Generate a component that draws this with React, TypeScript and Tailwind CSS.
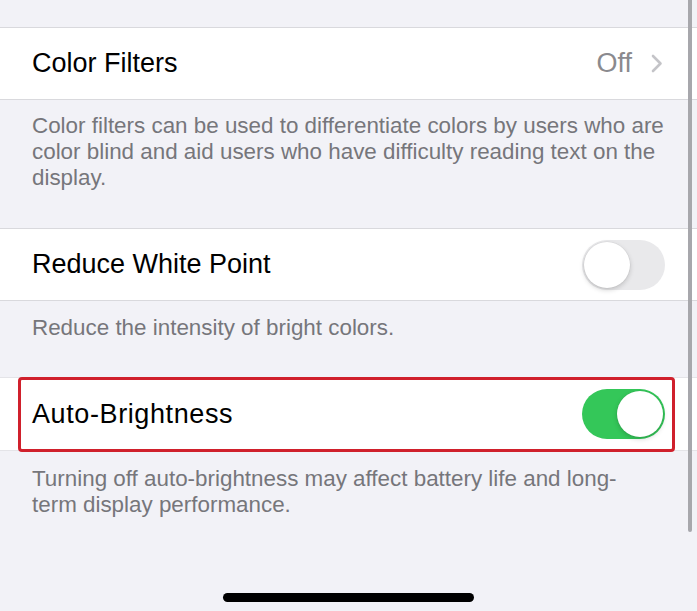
import React from "react";

function Toggle({ on }: { on: boolean }) {
  return (
    <div
      className={
        "w-[83px] h-[50px] rounded-full p-[2px] flex items-center " +
        (on ? "bg-[#34c759] justify-end" : "bg-[#e9e9eb] justify-start")
      }
    >
      <div className="w-[46px] h-[46px] rounded-full bg-white shadow-[0_2px_5px_rgba(0,0,0,0.18),0_0_0_0.5px_rgba(0,0,0,0.06)]" />
    </div>
  );
}

export default function App() {
  return (
    <div className="relative w-[697px] h-[611px] bg-[#f2f2f7] overflow-hidden flex flex-col font-['Liberation_Sans',Arial,sans-serif]">
      <div className="h-[27px] shrink-0" />

      {/* Color Filters */}
      <div className="h-[73px] shrink-0 bg-white border-y border-[#d9d9dd] flex items-center pl-[32px] pr-[34px]">
        <span className="text-[27px] text-black">Color Filters</span>
        <div className="ml-auto flex items-center gap-[19px]">
          <span className="text-[27px] text-[#8a8a8e]">Off</span>
          <svg width="12" height="19" viewBox="0 0 12 19" fill="none">
            <path d="M2 2 L9.5 9.5 L2 17" stroke="#c4c4c8" strokeWidth="2.6" strokeLinecap="round" strokeLinejoin="round" />
          </svg>
        </div>
      </div>
      <div className="shrink-0 pl-[32px] pt-[13px] pb-[37px] text-[22.4px] leading-[26px] text-[#76767b] whitespace-nowrap">
        Color filters can be used to differentiate colors by users who are
        <br />
        color blind and aid users who have difficulty reading text on the
        <br />
        display.
      </div>

      {/* Reduce White Point */}
      <div className="h-[73px] shrink-0 bg-white border-y border-[#d9d9dd] flex items-center pl-[32px] pr-[32px]">
        <span className="text-[27px] text-black">Reduce White Point</span>
        <div className="ml-auto">
          <Toggle on={false} />
        </div>
      </div>
      <div className="shrink-0 pl-[32px] pt-[14px] pb-[36px] text-[22.4px] leading-[26px] text-[#76767b] whitespace-nowrap">
        Reduce the intensity of bright colors.
      </div>

      {/* Auto-Brightness */}
      <div className="relative h-[74px] shrink-0 bg-white border-y border-[#e4e4e8] flex items-center pl-[32px] pr-[32px]">
        <span className="text-[27px] text-black tracking-[0.6px]">Auto-Brightness</span>
        <div className="ml-auto">
          <Toggle on={true} />
        </div>
        <div className="absolute left-[18px] right-[22px] top-[-1px] bottom-[-2px] border-[3px] border-[#d0202c] rounded-[4px]" />
      </div>
      <div className="shrink-0 pl-[32px] pt-[15px] text-[22.4px] leading-[26px] text-[#76767b] whitespace-nowrap">
        Turning off auto-brightness may affect battery life and long-
        <br />
        term display performance.
      </div>

      <div className="flex-1 flex items-end justify-center pb-[9px]">
        <div className="w-[251px] h-[9px] rounded-full bg-black" />
      </div>

      {/* scroll indicator */}
      <div className="absolute right-[5px] top-0 w-[4px] h-[532px] rounded-b-full bg-[#a7a7ac]" />
    </div>
  );
}
